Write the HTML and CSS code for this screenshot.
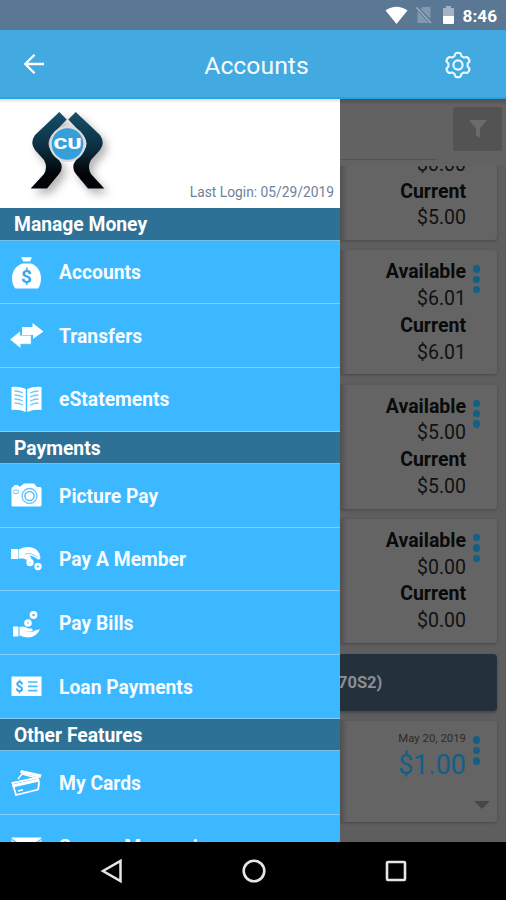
FILE: index.html
```
<!DOCTYPE html>
<html lang="en">
<head>
    <meta charset="UTF-8">
    <meta name="viewport" content="width=device-width, initial-scale=1.0">
    <title>Accounts</title>
    <link rel="stylesheet" href="styles.css">
</head>
<body>
    <div class="phone">
        <!-- Android status bar -->
        <div class="status-bar">
            <svg width="23" height="19" viewBox="0 0 23 19"><path d="M0.5 4.5Q11.500-3 22.500 4.500L11.500 18Z" fill="#fff"/></svg>
            <svg class="sim" width="16" height="18" viewBox="0 0 16 18"><path d="M6.500 1H14.500V13L4.500 3Z M1.500 5L13 17H1.500Z" fill="#8298ad"/><path d="M0.500 1.500L15 17" stroke="#9db0c1" stroke-width="1.300"/></svg>
            <svg class="battery" width="13" height="20" viewBox="0 0 13 20"><path d="M4 1H9V3H12V11H1V3H4Z" fill="#a3b3c3"/><path d="M1 11H12V18Q12 19 11 19H2Q1 19 1 18Z" fill="#fff"/></svg>
            <span class="clock">8:46</span>
        </div>

        <header class="app-bar">
            <svg class="back" width="22" height="22" viewBox="0 0 22 22" fill="none" stroke="#fff" stroke-width="2.300"><path d="M21 11H2.500M11.500 1.800L2.300 11L11.500 20.200"/></svg>
            <h1>Accounts</h1>
            <svg class="gear" width="28" height="28" viewBox="0 0 28 28" fill="none" stroke="#e9faff" stroke-width="2.100" stroke-linejoin="round"><path d="M11.400 2.500Q14 1 16.600 2.500L17.500 5.200L20 6.600L22.700 6Q25.500 7.500 25.500 10.500L23.600 12.500V15.500L25.500 17.500Q25.500 20.500 22.700 22L20 21.400L17.500 22.800L16.600 25.500Q14 27 11.400 25.500L10.500 22.800L8 21.400L5.300 22Q2.500 20.500 2.500 17.500L4.400 15.500V12.500L2.500 10.500Q2.500 7.500 5.300 6L8 6.600L10.500 5.200Z"/><circle cx="14" cy="14" r="4.600"/></svg>
        </header>

        <main class="content">
            <!-- Slide out menu -->
            <nav class="drawer">
                <div class="brand">
                    <svg class="logo" width="90" height="96" viewBox="0 0 90 96">
                        <defs>
                            <linearGradient id="ink" x1="0" y1="0" x2="0" y2="1">
                                <stop offset="0" stop-color="#17506c"/>
                                <stop offset="0.500" stop-color="#0b2b3b"/>
                                <stop offset="0.800" stop-color="#020507"/>
                            </linearGradient>
                            <path id="arm" d="M34.300 4L41.700 11.500L26 28Q21 36 26 43L34 52Q39.500 59 34 66L22 80.500H5.700L19 66Q23 59 19 52L10 42Q4.500 35 10 27Z"/>
                        </defs>
                        <g class="logo-shape" fill="url(#ink)">
                            <use href="#arm"/>
                            <use href="#arm" transform="matrix(-1 0 0 1 85 0)"/>
                        </g>
                        <circle cx="42.500" cy="36" r="18" fill="#d8dadd"/>
                        <circle cx="42.500" cy="36" r="15.800" fill="#349fd9"/>
                        <text x="28.500" y="41" class="logo-text" textLength="28" lengthAdjust="spacingAndGlyphs">CU</text>
                    </svg>
                    <span class="last-login">Last Login: 05/29/2019</span>
                </div>

                <h2 class="group">Manage Money</h2>
                <a class="item">
                    <svg width="34" height="34" viewBox="0 0 34 34"><path d="M11 1.500Q14 .5 16.500 1.500Q19 .5 22 1.500L20 5.500H13.500Z M12.500 7.500H21C28 10 31 16 31 22Q31 29 28 32.500H5.500Q2 29 2 22C2 15 6 10 12.500 7.500Z" fill="#fff"/><text x="16.500" y="27" class="dollar">$</text></svg>
                    <span>Accounts</span>
                </a>
                <a class="item">
                    <svg width="34" height="34" viewBox="0 0 34 34" fill="#fff"><path d="M12 8H22.500V4L33.500 12.500L23 20V16H12Z"/><path d="M0 20.500L10 12.500V16.500H21V25H10.500V29Z" stroke="#8ad3ff" stroke-width=".6"/></svg>
                    <span>Transfers</span>
                </a>
                <a class="item">
                    <svg width="34" height="34" viewBox="0 0 34 34"><path d="M1.500 4Q9 3 15.800 6V29Q9 26 1.500 27ZM31.500 4Q24 3 17.200 6V29Q24 26 31.500 27Z" fill="#fff"/><path d="M4.500 8Q9 8 13 10M4.500 12Q9 12 13 14M4.500 16Q9 16 13 18M4.500 20Q9 20 13 22M28.500 8Q24 8 20 10M28.500 12Q24 12 20 14M28.500 16Q24 16 20 18M28.500 20Q24 20 20 22" stroke="#74c9ff" stroke-width="1.300" fill="none"/></svg>
                    <span>eStatements</span>
                </a>

                <h2 class="group">Payments</h2>
                <a class="item">
                    <svg width="34" height="34" viewBox="0 0 34 34"><path d="M3 8L4.500 6H8L9.500 8L14 4.500H24L27 8H30Q31.500 8 31.500 10V26Q31.500 27.500 30 27.500H3Q1.500 27.500 1.500 26V10Q1.500 8 3 8Z" fill="#fff"/><circle cx="19.500" cy="17" r="7.500" fill="none" stroke="#6bc6ff" stroke-width="1.300"/><circle cx="19.500" cy="17" r="4.600" fill="none" stroke="#54bdff" stroke-width="1.500"/><rect x="3.500" y="11" width="5" height="3.500" rx="1.500" fill="none" stroke="#6bc6ff"/></svg>
                    <span>Picture Pay</span>
                </a>
                <a class="item">
                    <svg width="34" height="34" viewBox="0 0 34 34" fill="#fff"><path d="M1 6H8V16H1ZM8.500 6.500Q16 3 22 4.500Q30 7 30.500 15Q29 18 26 15L22 13L19 12.500Q23 15 20 16.500Q16 17.500 14 15.500L8.500 15.500Z"/><circle cx="20" cy="19.500" r="3.700"/><circle cx="28" cy="23.500" r="3.700"/><circle cx="20" cy="19.500" r=".8" fill="#9bd9ff"/><circle cx="28" cy="23.500" r="1.100" fill="#3bb8ff"/><path d="M15 11Q21 9 27 14" fill="none" stroke="#8ad3ff"/></svg>
                    <span>Pay A Member</span>
                </a>
                <a class="item">
                    <svg width="34" height="34" viewBox="0 0 34 34" fill="#fff"><path d="M3 19.500H8.500V29.500H3ZM9.500 20Q14 18.500 18 21.500H22Q23.500 23 22 24.500H15L22 25Q26 22 30 22.500Q26 30 19 30.500Q14 30.500 9.500 28.500Z"/><circle cx="18" cy="16" r="3.800"/><circle cx="23.500" cy="8" r="3.900"/><circle cx="18" cy="16" r=".9" fill="#8ad3ff"/><circle cx="23.500" cy="8" r="1.200" fill="#3bb8ff"/></svg>
                    <span>Pay Bills</span>
                </a>
                <a class="item">
                    <svg width="34" height="34" viewBox="0 0 34 34"><path d="M1.500 6.500H31.500V26H1.500Z" fill="#fff"/><path d="M18 12H27.500M18 16.300H27.500M18 20.600H27.500" stroke="#4dbcfa" stroke-width="1.700"/><text x="9.300" y="21.500" class="dollar small">$</text></svg>
                    <span>Loan Payments</span>
                </a>

                <h2 class="group">Other Features</h2>
                <a class="item">
                    <svg width="34" height="34" viewBox="0 0 34 34"><path d="M11 4L31.500 8.500L30.500 12L10 7Z" fill="#fff"/><path d="M8 13L12 8L27 12" fill="none" stroke="#fff" stroke-width="1.500"/><path d="M2.500 17L27.500 11.500Q30 16 28 23.500L6 29Z" fill="none" stroke="#fff" stroke-width="1.800"/><path d="M2.500 20L29 14" stroke="#fff" stroke-width="3"/><path d="M8 25L13 23.800" stroke="#fff" stroke-width="1.500"/></svg>
                    <span>My Cards</span>
                </a>
                <a class="item last">
                    <svg width="34" height="34" viewBox="0 0 34 34"><path d="M1.500 7H31.500V28H1.500Z" fill="#c9ecff"/><path d="M1.500 6.500H31.500L16.500 17Z" fill="#fff"/><path d="M1.500 8L16.500 19L31.500 8" stroke="#3bb8ff" fill="none"/></svg>
                    <span>Secure Messaging</span>
                </a>
            </nav>

            <!-- Account list, dimmed behind the menu -->
            <section class="accounts">
                <div class="toolbar">
                    <div class="search"></div>
                    <div class="filter">
                        <svg width="18" height="20" viewBox="0 0 18 20"><path d="M0 1H18L11 9.500V19L7 16V9.500Z" fill="#6b6b6b"/></svg>
                    </div>
                </div>
                <div class="list">
                    <div class="card first">
                        <div class="amounts"><b>Available</b><span>$0.00</span><b>Current</b><span>$5.00</span></div>
                        <div class="dots"><i></i><i></i><i></i></div>
                    </div>
                    <div class="card">
                        <div class="amounts"><b>Available</b><span>$6.01</span><b>Current</b><span>$6.01</span></div>
                        <div class="dots"><i></i><i></i><i></i></div>
                    </div>
                    <div class="card">
                        <div class="amounts"><b>Available</b><span>$5.00</span><b>Current</b><span>$5.00</span></div>
                        <div class="dots"><i></i><i></i><i></i></div>
                    </div>
                    <div class="card">
                        <div class="amounts"><b>Available</b><span>$0.00</span><b>Current</b><span>$0.00</span></div>
                        <div class="dots"><i></i><i></i><i></i></div>
                    </div>
                    <div class="banner"><span>70S2)</span></div>
                    <div class="card payment">
                        <div class="amounts"><small>May 20, 2019</small><strong>$1.00</strong><em class="caret"></em></div>
                        <div class="dots"><i></i><i></i><i></i></div>
                    </div>
                </div>
            </section>
        </main>

        <!-- Android navigation bar -->
        <footer class="nav-bar">
            <svg width="24" height="26" viewBox="0 0 24 26"><path d="M20.500 3V23L3 13Z" fill="none" stroke="#e6e6e6" stroke-width="2.500"/></svg>
            <svg width="26" height="26" viewBox="0 0 26 26"><circle cx="13" cy="13" r="10.300" fill="none" stroke="#e6e6e6" stroke-width="2.600"/></svg>
            <svg width="24" height="24" viewBox="0 0 24 24"><rect x="3" y="3" width="18" height="18" rx="1" fill="none" stroke="#e6e6e6" stroke-width="2.600"/></svg>
        </footer>
    </div>
</body>
</html>
```
FILE: styles.css
```
* {
    box-sizing: border-box;
}
body {
    margin: 0;
    font-family: Roboto, "Liberation Sans", sans-serif;
}
svg {
    display: block;
    flex: none;
}
.phone {
    width: 506px;
    height: 900px;
    display: flex;
    flex-direction: column;
    overflow: hidden;
    background: #000;
}
.status-bar {
    height: 30px;
    flex: none;
    display: flex;
    align-items: center;
    justify-content: flex-end;
    padding-right: 9px;
    background: #5a7894;
}
.sim {
    margin-left: 8px;
}
.battery {
    margin-left: 10px;
}
.clock {
    margin-left: 8px;
    color: #fff;
    font-size: 17.2px;
    font-weight: 700;
    line-height: 30px;
    padding-top: 2px;
}
.app-bar {
    height: 69px;
    flex: none;
    display: flex;
    align-items: center;
    justify-content: space-between;
    padding: 0 34px 0 23px;
    background: #42aae1;
    border-bottom: 2px solid #25a3e3;
}
.app-bar h1 {
    margin: 4px 0 0 24px;
    color: #f4fcff;
    font-size: 24.800px;
    font-weight: 400;
    line-height: 30px;
}
.gear {
    margin-top: 3px;
}
.content {
    height: 743px;
    flex: none;
    display: flex;
    overflow: hidden;
}

/* Drawer */
.drawer {
    width: 340px;
    flex: none;
    overflow: hidden;
    background: #3bb8ff;
}
.brand {
    height: 109px;
    display: flex;
    align-items: flex-end;
    justify-content: space-between;
    padding: 0 6px 6px 25px;
    background: linear-gradient(#ddd, #fff 4px);
}
.logo {
    margin-bottom: -2px;
}
.logo-shape {
    filter: drop-shadow(4px 5px 4px rgba(0, 0, 0, 0.3));
}
.logo-text {
    fill: #fff;
    font-size: 14.500px;
    font-weight: 900;
}
.last-login {
    color: #6d819b;
    font-size: 13.800px;
    line-height: 20px;
}
.group {
    height: 32.500px;
    margin: 0;
    padding-left: 14px;
    background: #2d7296;
    border-bottom: 1px solid #75bfe6;
    color: #fff;
    font-size: 19.300px;
    font-weight: 700;
    line-height: 33px;
}
.item {
    height: 63.700px;
    display: flex;
    align-items: center;
    gap: 15px;
    padding: 1.500px 0 0 10px;
    border-bottom: 1.500px solid #7fceff;
    color: #f6fcff;
    font-size: 19.300px;
    font-weight: 700;
}
.item.last {
    padding-top: 3px;
}
.dollar {
    fill: #35a9eb;
    font-size: 19px;
    font-weight: 700;
    text-anchor: middle;
}
.dollar.small {
    font-size: 14px;
}

/* Account list */
.accounts {
    width: 166px;
    display: flex;
    flex-direction: column;
    background: #5e5e5e;
}
.toolbar {
    height: 67px;
    flex: none;
    display: flex;
    justify-content: space-between;
    padding: 8px 4px 0 0;
    background: linear-gradient(#505050, #626262 6px);
}
.search {
    width: 97px;
    height: 53px;
    border-bottom: 1px solid #43566a;
}
.filter {
    width: 49px;
    height: 44px;
    display: flex;
    align-items: center;
    justify-content: center;
    background: #535353;
    border-radius: 2px;
}
.list {
    flex: 1;
    display: flex;
    flex-direction: column;
    gap: 10.300px;
    padding-right: 9px;
    overflow: hidden;
}
.card {
    height: 124px;
    flex: none;
    display: flex;
    justify-content: flex-end;
    gap: 7px;
    padding: 9px 17px 0 0;
    background: linear-gradient(90deg, #505050, #646464 8px);
    border-radius: 0 4px 4px 0;
    box-shadow: 0 1px 3px #484848;
}
.card.first {
    margin-top: -50px;
}
.amounts {
    display: flex;
    flex-direction: column;
    align-items: flex-end;
    color: #111;
    font-size: 19.500px;
    line-height: 26.800px;
}
.amounts b {
    color: #0a0a0a;
    font-weight: 700;
}
.dots {
    display: flex;
    flex-direction: column;
    gap: 3px;
    padding-top: 6px;
}
.dots i {
    width: 7px;
    height: 7.400px;
    border-radius: 50%;
    background: #126086;
}
.banner {
    height: 57px;
    flex: none;
    margin-top: 1px;
    background: #25303d;
    border-radius: 0 4px 4px 0;
    box-shadow: 0 2px 3px #484848;
    color: #8b8f94;
    font-size: 16.500px;
    font-weight: 700;
    line-height: 58px;
}
.banner span {
    margin-left: -2px;
}
.card.payment {
    height: 101px;
}
.payment small {
    color: #2c2c2c;
    font-size: 11.400px;
    line-height: 17px;
}
.payment strong {
    color: #125f87;
    font-size: 27px;
    font-weight: 400;
    line-height: 36px;
}
.caret {
    margin: 18px -24px 0 0;
    border: 8px solid transparent;
    border-top-color: #474747;
    border-bottom: 0;
}

/* Bottom navigation */
.nav-bar {
    height: 58px;
    flex: none;
    display: flex;
    align-items: center;
    justify-content: space-between;
    padding: 0 98px 0 100px;
    background: #000;
}
```
